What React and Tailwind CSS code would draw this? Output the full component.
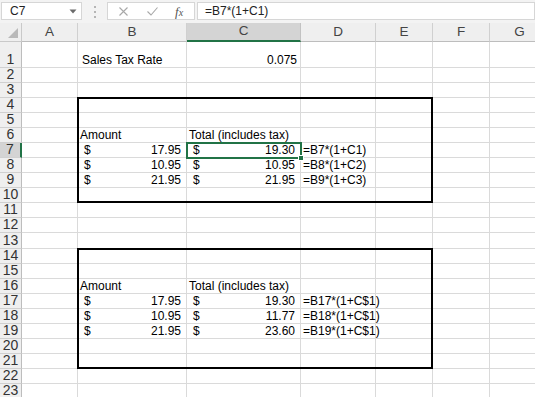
import React from 'react';

const COLS = [
  { key: 'A', w: 'w-[56px]' },
  { key: 'B', w: 'w-[109px]' },
  { key: 'C', w: 'w-[114px]' },
  { key: 'D', w: 'w-[75px]' },
  { key: 'E', w: 'w-[57px]' },
  { key: 'F', w: 'w-[57px]' },
  { key: 'G', w: 'w-[60px]' },
];

const ROWS = Array.from({ length: 23 }, (_, i) => i + 1);

const rowHeight = (n) => (n === 1 ? 'h-[26px]' : n === 13 ? 'h-[16px]' : 'h-[15px]');

// cell contents: text = plain left, right = right aligned, acct = accounting ($ left, value right)
const CELLS = {
  '1B': { text: 'Sales Tax Rate', pad: 'pl-[4px]' },
  '1C': { right: '0.075' },
  '6B': { text: 'Amount' },
  '6C': { text: 'Total (includes tax)' },
  '7B': { acct: '17.95' },
  '7C': { acct: '19.30' },
  '7D': { text: '=B7*(1+C1)' },
  '8B': { acct: '10.95' },
  '8C': { acct: '10.95' },
  '8D': { text: '=B8*(1+C2)' },
  '9B': { acct: '21.95' },
  '9C': { acct: '21.95' },
  '9D': { text: '=B9*(1+C3)' },
  '16B': { text: 'Amount' },
  '16C': { text: 'Total (includes tax)' },
  '17B': { acct: '17.95' },
  '17C': { acct: '19.30' },
  '17D': { text: '=B17*(1+C$1)' },
  '18B': { acct: '10.95' },
  '18C': { acct: '11.77' },
  '18D': { text: '=B18*(1+C$1)' },
  '19B': { acct: '21.95' },
  '19C': { acct: '23.60' },
  '19D': { text: '=B19*(1+C$1)' },
};

const CellContent = ({ cell }) => {
  if (!cell) return null;
  if (cell.acct) {
    return (
      <div className="flex w-full justify-between pl-[6px] pr-[5px]">
        <span>$</span>
        <span>{cell.acct}</span>
      </div>
    );
  }
  if (cell.right) {
    return <div className="w-full text-right pr-[3px]">{cell.right}</div>;
  }
  return <div className={`whitespace-nowrap ${cell.pad || 'pl-[2px]'}`}>{cell.text}</div>;
};

const Toolbar = () => (
  <div className="flex h-[23px] items-start bg-[#f3f3f3] pt-[2px] text-[12px] text-[#222]">
    {/* Name box */}
    <div className="ml-[1px] flex h-[18px] w-[81px] items-center justify-between border border-[#d6d6d6] bg-white pl-[8px] pr-[4px]">
      <span>C7</span>
      <svg width="8" height="5" viewBox="0 0 8 5">
        <path d="M0.5 0.5 L7.5 0.5 L4 4.5 Z" fill="#6b6b6b" />
      </svg>
    </div>
    {/* grip dots */}
    <div className="flex w-[25px] flex-col items-center gap-[3px] pt-[4px]">
      <span className="block h-[2px] w-[2px] bg-[#b5b5b5]" />
      <span className="block h-[2px] w-[2px] bg-[#b5b5b5]" />
      <span className="block h-[2px] w-[2px] bg-[#b5b5b5]" />
    </div>
    {/* cancel / enter / fx */}
    <div className="flex h-[18px] w-[88px] items-center border border-[#d6d6d6] bg-white">
      <svg className="ml-[11px]" width="9" height="9" viewBox="0 0 9 9">
        <path d="M0.5 0.5 L8.5 8.5 M8.5 0.5 L0.5 8.5" stroke="#a8a8a8" strokeWidth="1.1" />
      </svg>
      <svg className="ml-[19px]" width="11" height="9" viewBox="0 0 11 9">
        <path d="M0.5 4.5 L4 8 L10.5 0.5" stroke="#a8a8a8" strokeWidth="1.1" fill="none" />
      </svg>
      <span className="ml-[17px] font-['Liberation_Serif',serif] italic text-[13px] leading-none text-[#555]">
        f<span className="text-[10px]">x</span>
      </span>
    </div>
    {/* formula input */}
    <div className="ml-[2px] flex h-[18px] flex-1 items-center border border-[#d6d6d6] bg-white pl-[7px]">
      =B7*(1+C1)
    </div>
  </div>
);

const Sheet = () => (
  <div className="relative">
    {/* column headers */}
    <div className="flex h-[19px] bg-[#efefef] text-[13.5px] text-[#444]">
      <div className="relative w-[22px] shrink-0 border-r border-b border-[#c9c9c9]">
        <svg className="absolute bottom-[3px] right-[3px]" width="10" height="10" viewBox="0 0 10 10">
          <path d="M10 0 L10 10 L0 10 Z" fill="#b9b9b9" />
        </svg>
      </div>
      {COLS.map((c) => (
        <div
          key={c.key}
          className={`${c.w} shrink-0 flex items-center justify-center border-r ${
            c.key === 'C'
              ? 'bg-[#d4d4d4] border-[#c2c2c2] border-b-2 border-b-[#217346]'
              : 'border-[#d0d0d0] border-b border-b-[#bdbdbd]'
          }`}
        >
          {c.key}
        </div>
      ))}
    </div>

    {/* rows */}
    {ROWS.map((r) => (
      <div key={r} className={`flex ${rowHeight(r)}`}>
        <div
          className={`w-[22px] shrink-0 flex items-end justify-center text-[14px] leading-[15px] text-[#333] border-b border-[#d0d0d0] ${
            r === 7
              ? 'bg-[#d4d4d4] border-r-2 border-r-[#217346]'
              : 'bg-[#efefef] border-r border-r-[#bdbdbd]'
          }`}
        >
          {r}
        </div>
        {COLS.map((c) => (
          <div
            key={c.key}
            className={`${c.w} shrink-0 flex items-end overflow-visible border-r border-b border-[#dadada] text-[12px] leading-[14px] text-black`}
          >
            <CellContent cell={CELLS[`${r}${c.key}`]} />
          </div>
        ))}
      </div>
    ))}

    {/* outlined blocks */}
    <div className="pointer-events-none absolute left-[77px] top-[74px] h-[106px] w-[356px] border-2 border-black" />
    <div className="pointer-events-none absolute left-[77px] top-[225px] h-[121px] w-[356px] border-2 border-black" />

    {/* active cell C7 */}
    <div className="pointer-events-none absolute left-[186px] top-[119px] h-[17px] w-[116px] border-2 border-[#217346]">
      <span className="absolute -bottom-[4px] -right-[4px] block h-[6px] w-[6px] border border-white bg-[#217346]" />
    </div>
  </div>
);

export default function App() {
  return (
    <div className="h-[397px] w-[535px] overflow-hidden bg-white font-['Liberation_Sans',Arial,sans-serif]">
      <Toolbar />
      <Sheet />
    </div>
  );
}
